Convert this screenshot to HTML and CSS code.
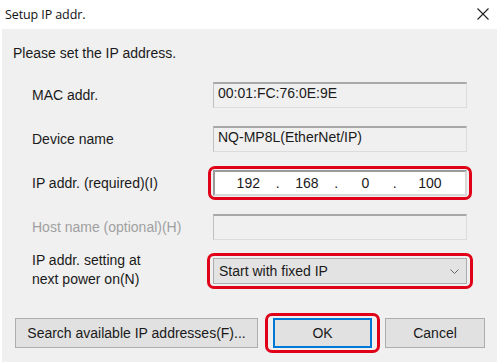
FILE: index.html
```html
<!DOCTYPE html>
<html lang="en">
<head>
    <meta charset="UTF-8">
    <title>Setup IP addr.</title>
    <link rel="stylesheet" href="styles.css">
</head>
<body>
    <div class="dialog">
        <div class="titlebar">
            <span class="title">Setup IP addr.</span>
            <svg class="close" width="12" height="12" viewBox="0 0 12 12">
                <path d="M0.5 0.5 L11.5 11.5 M11.5 0.5 L0.5 11.5" stroke="#222" stroke-width="1.1" fill="none"/>
            </svg>
        </div>

        <div class="panel">
            <p class="intro">Please set the IP address.</p>

            <div class="form">
                <label class="label">MAC addr.</label>
                <div class="field readonly">00:01:FC:76:0E:9E</div>

                <label class="label">Device name</label>
                <div class="field readonly">NQ-MP8L(EtherNet/IP)</div>

                <label class="label">IP addr. (required)(I)</label>
                <div class="field ip marked">
                    <span class="octet">192</span><span class="dot">.</span>
                    <span class="octet">168</span><span class="dot">.</span>
                    <span class="octet">0</span><span class="dot">.</span>
                    <span class="octet last">100</span>
                </div>

                <label class="label disabled">Host name (optional)(H)</label>
                <div class="field readonly"></div>

                <label class="label two-line">IP addr. setting at<br>next power on(N)</label>
                <div class="field select marked">
                    <span>Start with fixed IP</span>
                    <svg width="9" height="5" viewBox="0 0 9 5">
                        <path d="M0.5 0.5 L4.5 4.5 L8.5 0.5" stroke="#666" stroke-width="1" fill="none"/>
                    </svg>
                </div>
            </div>

            <div class="buttons">
                <button class="btn search">Search available IP addresses(F)...</button>
                <button class="btn ok marked">OK</button>
                <button class="btn cancel">Cancel</button>
            </div>
        </div>
    </div>
</body>
</html>
```

FILE: styles.css
```css
body {
    margin: 0;
    padding: 0;
    background-color: #fff;
    font-family: 'Liberation Sans', Arial, sans-serif;
    font-size: 14px;
    color: #1a1a1a;
}

.dialog {
    width: 500px;
    height: 364px;
    display: flex;
    flex-direction: column;
}

.titlebar {
    height: 29px;
    display: flex;
    align-items: center;
    justify-content: space-between;
    padding: 0 11px 0 5px;
    box-sizing: border-box;
}

.title {
    font-family: 'Open Sans', 'Noto Sans', sans-serif;
    font-size: 12.5px;
    color: #111;
    letter-spacing: -0.1px;
}

.close {
    margin-top: -2px;
}

.panel {
    background-color: #f0f0f0;
    margin: 0 3px 2px 2px;
    flex: 1;
    padding: 16px 0 0 11px;
}

.intro {
    margin: 0 0 21px 0;
    height: 16px;
    line-height: 16px;
}

.form {
    display: grid;
    grid-template-columns: 181px 254px;
    grid-auto-rows: 26px;
    row-gap: 18px;
    padding-left: 19px;
    align-items: center;
}

.label {
    line-height: 16px;
}

.label.disabled {
    color: #a0a0a0;
}

.label.two-line {
    line-height: 19px;
    margin-top: -2px;
}

.field {
    height: 26px;
    box-sizing: border-box;
    display: flex;
    align-items: center;
    padding: 0 4px;
    position: relative;
}

.readonly {
    background-color: #f0f0f0;
    border: 1px solid #dcdcdc;
    border-top: 2px solid #a8a8a8;
    border-left: 1px solid #c0c0c0;
    padding-bottom: 6px;
    align-items: flex-start;
    padding-top: 1px;
}

.ip {
    background-color: #fff;
    border: 2px solid #9a9a9a;
    border-right-color: #d8d8d8;
    border-bottom-color: #d8d8d8;
    padding: 0 0 0 4px;
}

.octet {
    flex: 1;
    text-align: center;
}

.octet.last {
    flex: 1.2;
}

.dot {
    width: 0;
    display: flex;
    justify-content: center;
}

.select {
    background-color: #e3e3e3;
    border: 1px solid #acacac;
    justify-content: space-between;
    padding: 0 7px 0 5px;
}

.marked::after {
    content: '';
    position: absolute;
    top: -6px;
    bottom: -6px;
    left: -7px;
    right: -7px;
    border: 3px solid #e00018;
    border-radius: 7px;
}

.buttons {
    display: flex;
    margin-top: 34px;
    padding-left: 2px;
}

.btn {
    height: 30px;
    background-color: #e1e1e1;
    border: 1px solid #adadad;
    font-family: 'Liberation Sans', Arial, sans-serif;
    font-size: 14px;
    color: #1a1a1a;
    padding: 0;
    position: relative;
}

.search {
    width: 243px;
}

.ok {
    width: 99px;
    margin-left: 15px;
    border: 2px solid #0078d7;
}

.ok.marked::after {
    top: -7px;
    bottom: -7px;
    left: -10px;
    right: -10px;
}

.cancel {
    width: 100px;
    margin-left: 13px;
}
```
